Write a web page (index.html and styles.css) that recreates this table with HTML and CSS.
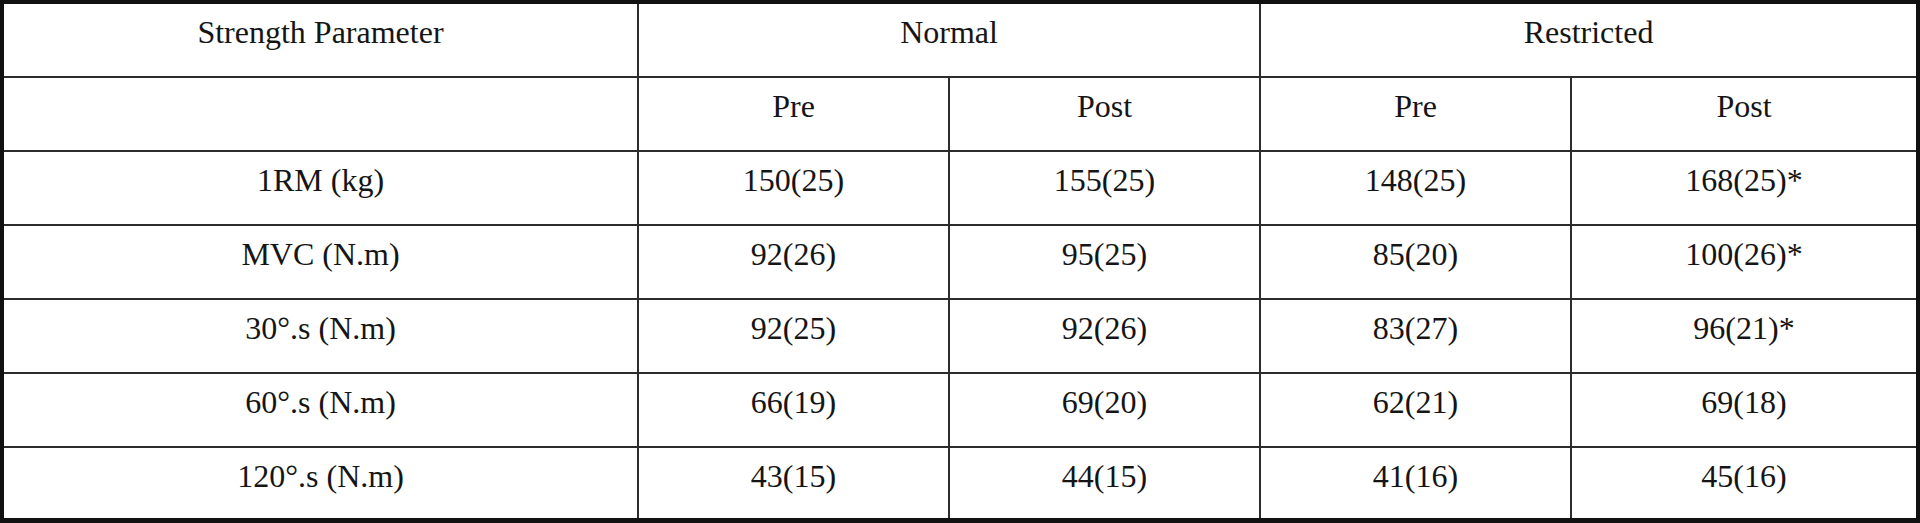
FILE: index.html
```html
<!DOCTYPE html>
<html lang="en">
<head>
<meta charset="utf-8">
<title>Strength Parameters</title>
<link rel="stylesheet" href="styles.css">
</head>
<body>
<table class="data">
  <colgroup>
    <col class="c-param">
    <col class="c-val">
    <col class="c-val">
    <col class="c-val">
    <col class="c-last">
  </colgroup>
  <tr>
    <td>Strength Parameter</td>
    <td colspan="2">Normal</td>
    <td colspan="2" class="end">Restricted</td>
  </tr>
  <tr>
    <td></td>
    <td>Pre</td>
    <td>Post</td>
    <td>Pre</td>
    <td class="end">Post</td>
  </tr>
  <tr>
    <td>1RM (kg)</td>
    <td>150(25)</td>
    <td>155(25)</td>
    <td>148(25)</td>
    <td class="end">168(25)*</td>
  </tr>
  <tr>
    <td>MVC (N.m)</td>
    <td>92(26)</td>
    <td>95(25)</td>
    <td>85(20)</td>
    <td class="end">100(26)*</td>
  </tr>
  <tr>
    <td>30°.s (N.m)</td>
    <td>92(25)</td>
    <td>92(26)</td>
    <td>83(27)</td>
    <td class="end">96(21)*</td>
  </tr>
  <tr>
    <td>60°.s (N.m)</td>
    <td>66(19)</td>
    <td>69(20)</td>
    <td>62(21)</td>
    <td class="end">69(18)</td>
  </tr>
  <tr class="last">
    <td>120°.s (N.m)</td>
    <td>43(15)</td>
    <td>44(15)</td>
    <td>41(16)</td>
    <td class="end">45(16)</td>
  </tr>
</table>
</body>
</html>
```
FILE: styles.css
```css
html, body {
  margin: 0;
  padding: 0;
  background: #ffffff;
}

.data {
  width: 1920px;
  table-layout: fixed;
  border-collapse: separate;
  border-spacing: 0;
  border-style: solid;
  border-color: #111111;
  border-width: 4px 4px 5px 4px;
  box-sizing: border-box;
  font-family: "Liberation Serif", "Times New Roman", serif;
  font-size: 32px;
  color: #151515;
}

.c-param { width: 635px; }
.c-val { width: 311px; }
.c-last { width: 344px; }

.data td {
  text-align: center;
  vertical-align: top;
  line-height: 36px;
  height: 36px;
  padding: 10px 0 26px 0;
  border-right: 2px solid #2c2c2c;
  border-bottom: 2px solid #2c2c2c;
  white-space: nowrap;
}

.data td.end {
  border-right: none;
}

.data tr.last td {
  border-bottom: none;
  padding-bottom: 24px;
}
```
